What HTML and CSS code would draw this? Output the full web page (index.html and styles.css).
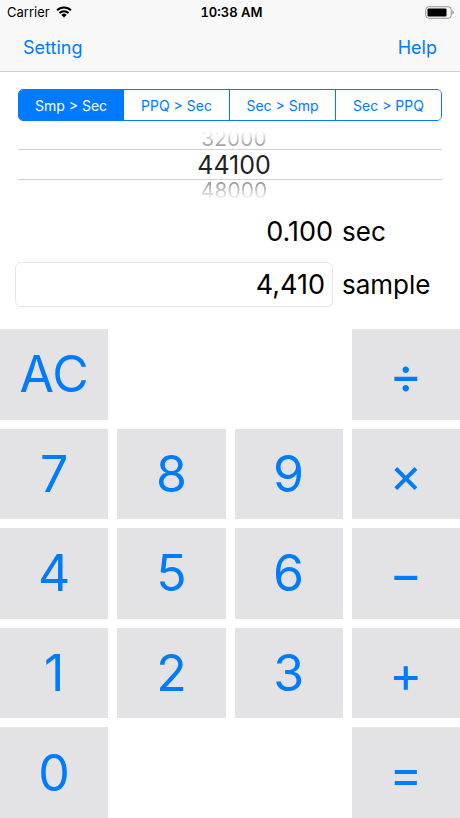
FILE: index.html
```html
<!DOCTYPE html>
<html lang="en">
<head>
<meta charset="utf-8">
<meta name="viewport" content="width=device-width, initial-scale=1">
<title>Sample Calculator</title>
<link rel="stylesheet" href="styles.css">
</head>
<body>
<div class="app">
  <header class="header">
    <div class="status">
      <div class="carrier">
        <span>Carrier</span>
        <svg class="wifi" viewBox="0 0 16 12" aria-hidden="true">
          <path d="M1 4.3a10 10 0 0 1 14 0M3.5 7a6.4 6.4 0 0 1 9 0" fill="none" stroke="#000" stroke-width="2"/>
          <path d="M5.4 8.9a3.7 3.7 0 0 1 5.2 0L8 11.5z"/>
        </svg>
      </div>
      <span class="time">10:38 AM</span>
      <svg class="battery" viewBox="0 0 29 13" aria-hidden="true">
        <rect x=".75" y=".75" width="25.5" height="11.5" rx="3" fill="none" stroke="#929292" stroke-width="1"/>
        <rect x="2.5" y="2.5" width="19" height="8" rx="1"/>
        <path d="M27.3 4.5q1.5.6 1.5 2t-1.5 2z" fill="#929292"/>
      </svg>
    </div>
    <nav class="nav">
      <a href="#setting">Setting</a>
      <a href="#help">Help</a>
    </nav>
  </header>
  <main class="main">
    <div class="segments" role="group" aria-label="Conversion">
      <button class="segment" type="button" aria-pressed="true">Smp &gt; Sec</button>
      <button class="segment" type="button" aria-pressed="false">PPQ &gt; Sec</button>
      <button class="segment" type="button" aria-pressed="false">Sec &gt; Smp</button>
      <button class="segment" type="button" aria-pressed="false">Sec &gt; PPQ</button>
    </div>
    <div class="picker" role="listbox" aria-label="Sample rate">
      <div class="rate rate-before" role="option" aria-selected="false">32000</div>
      <div class="rate rate-current" role="option" aria-selected="true">44100</div>
      <div class="rate rate-after" role="option" aria-selected="false">48000</div>
    </div>
    <div class="values">
      <output class="result" id="result">0.100</output>
      <label class="unit" for="result">sec</label>
      <input class="entry" id="entry" type="text" inputmode="numeric" value="4,410">
      <label class="unit" for="entry">sample</label>
    </div>
    <div class="keypad">
      <button class="key first" type="button">AC</button>
      <button class="key last operator" type="button">÷</button>
      <button class="key" type="button">7</button>
      <button class="key" type="button">8</button>
      <button class="key" type="button">9</button>
      <button class="key operator" type="button">×</button>
      <button class="key" type="button">4</button>
      <button class="key" type="button">5</button>
      <button class="key" type="button">6</button>
      <button class="key operator" type="button">−</button>
      <button class="key" type="button">1</button>
      <button class="key" type="button">2</button>
      <button class="key" type="button">3</button>
      <button class="key operator" type="button">+</button>
      <button class="key first" type="button">0</button>
      <button class="key last operator" type="button">=</button>
    </div>
  </main>
</div>
</body>
</html>
```
FILE: styles.css
```css
:root {
  --blue: #007aff;
  --key: #e3e3e5;
}

* {
  box-sizing: border-box;
}

body {
  margin: 0;
  background: #fff;
  color: #000;
  font-family: Inter, "Liberation Sans", sans-serif;
}

button,
input {
  margin: 0;
  padding: 0;
  border: 0;
  font: inherit;
}

.app {
  display: flex;
  flex-direction: column;
  min-height: 100vh;
}

.header {
  background: #f8f8f8;
  border-bottom: 1px solid #cfcfcf;
}

.status {
  display: grid;
  grid-template-columns: 1fr auto 1fr;
  align-items: center;
  height: 24px;
  padding: 0 6px 0 7px;
  font-size: 13px;
}

.carrier {
  display: flex;
  align-items: center;
  gap: 6px;
}

.wifi {
  width: 16px;
  height: 12px;
}

.time {
  padding-left: 2px;
  font-weight: 600;
  font-variant-numeric: tabular-nums;
}

.battery {
  justify-self: end;
  width: 29px;
  height: 13px;
}

.nav {
  display: flex;
  align-items: center;
  justify-content: space-between;
  height: 47px;
  padding: 0 23px;
  font-size: 18px;
}

.nav a {
  color: var(--blue);
  text-decoration: none;
}

.main {
  display: flex;
  flex: 1;
  flex-direction: column;
}

.segments {
  display: grid;
  grid-template-columns: 104px repeat(3, 1fr);
  height: 32px;
  margin: 17px 18px 0;
  overflow: hidden;
  border: 1px solid var(--blue);
  border-radius: 5px;
}

.segment {
  background: #fff;
  color: var(--blue);
  font-size: 14px;
}

.segment + .segment {
  border-left: 1px solid var(--blue);
}

.segment[aria-pressed="true"] {
  background: var(--blue);
  color: #fff;
}

.picker {
  display: grid;
  grid-template-rows: 18px 31px 20px;
  margin: 10px 18px 0;
  text-align: center;
}

.rate {
  padding-left: 8px;
  color: #888;
  font-size: 21px;
}

.rate-before {
  line-height: 16px;
  mask-image: linear-gradient(transparent, #000);
}

.rate-after {
  line-height: 22px;
  mask-image: linear-gradient(#000, transparent);
}

.rate-current {
  border: solid #d2d2d2;
  border-width: 1px 0;
  color: #222;
  font-size: 25px;
  line-height: 30px;
}

.values {
  display: grid;
  grid-template-columns: 1fr 103px;
  gap: 11px 9px;
  align-items: center;
  padding: 13px 15px 22px;
  font-size: 27px;
  line-height: 38px;
}

.unit {
  font-size: 26px;
}

.result {
  text-align: right;
}

.entry {
  width: 100%;
  height: 45px;
  padding: 0 7px;
  border: 1px solid #e6e6e6;
  border-radius: 6px;
  background: #fff;
  color: #000;
  text-align: right;
}

.keypad {
  display: grid;
  flex: 1;
  grid-template-columns: repeat(4, 1fr);
  grid-auto-rows: 1fr;
  gap: 9px;
}

.key {
  min-height: 64px;
  background: var(--key);
  color: var(--blue);
  font-size: 50px;
  line-height: 60px;
}

.operator {
  padding-top: 2px;
}

.first {
  grid-column: 1;
}

.last {
  grid-column: 4;
}
```
